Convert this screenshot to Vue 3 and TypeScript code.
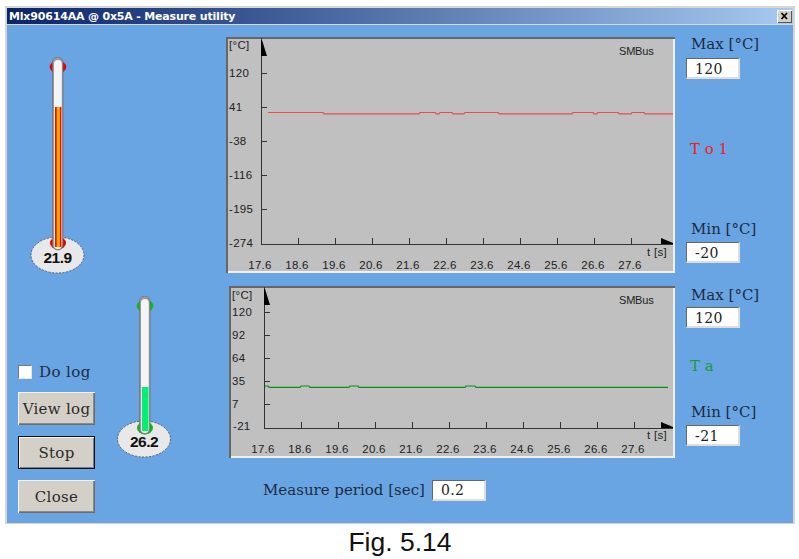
<script setup lang="ts">
interface Chart {
  id: string
  viewBox: string
  axisX: number
  axisY: number
  top: number
  right: number
  yTicks: { y: number; label: string; x: number }[]
  unitX: number
  unitY: number
  labelY: number
  labelX0: number
  tickX0: number
  smbusY: number
  tY: number
  line: string
  color: string
}

const xLabels = ['17.6', '18.6', '19.6', '20.6', '21.6', '22.6', '23.6', '24.6', '25.6', '26.6', '27.6']
const tickOffsets = [0, 1, 2, 3, 4, 5, 6, 7, 8, 9]

const hi = 112.5
const lo = 113.8
const steps: [number, number][] = [
  [268, hi], [323, hi], [324, lo], [419, lo], [420, hi], [435, hi], [436, lo], [439, lo], [440, hi],
  [452, hi], [453, lo], [464, lo], [465, hi], [498, hi], [499, lo], [572, lo], [573, hi], [593, hi],
  [594, lo], [597, lo], [598, hi], [618, hi], [619, lo], [631, lo], [632, hi], [644, hi], [645, lo], [673, lo],
]
const redLine = steps.map(p => p.join(',')).join(' ')

const gh = 386
const gl = 387.3
const gSteps: [number, number][] = [
  [265, gh], [268, gh], [269, gl], [300, gl], [301, gh], [309, gh], [310, gl], [349, gl], [350, gh],
  [358, gh], [359, gl], [465, gl], [466, gh], [475, gh], [476, gl], [668, gl],
]
const greenLine = gSteps.map(p => p.join(',')).join(' ')

const charts: Chart[] = [
  {
    id: 'to1', viewBox: '226 37 449 236', axisX: 261, axisY: 244, top: 38, right: 673,
    yTicks: [
      { y: 73, label: '120', x: 229 }, { y: 107, label: '41', x: 229 }, { y: 141, label: '-38', x: 229 },
      { y: 175, label: '-116', x: 229 }, { y: 209, label: '-195', x: 229 },
    ],
    unitX: 229, unitY: 49, labelY: 269, labelX0: 260, tickX0: 298, smbusY: 55, tY: 256,
    line: redLine, color: '#f04848',
  },
  {
    id: 'ta', viewBox: '229 286 446 172', axisX: 264, axisY: 428, top: 287, right: 673,
    yTicks: [
      { y: 312, label: '120', x: 232 }, { y: 335, label: '92', x: 232 }, { y: 358, label: '64', x: 232 },
      { y: 381, label: '35', x: 232 }, { y: 404, label: '7', x: 232 },
    ],
    unitX: 232, unitY: 299, labelY: 453, labelX0: 263, tickX0: 301, smbusY: 304, tY: 439,
    line: greenLine, color: '#0c8a1c',
  },
]

const bottomLabel = (c: Chart) => (c.id === 'to1' ? '-274' : '-21')
const bottomLabelX = (c: Chart) => (c.id === 'to1' ? 229 : 233)
const bottomLabelY = (c: Chart) => (c.id === 'to1' ? 247 : 430)

const xArrow = (c: Chart) =>
  `${c.right - 12},${c.axisY - 6} ${c.right},${c.axisY - 1} ${c.right},${c.axisY} ${c.right - 12},${c.axisY}`
const yArrow = (c: Chart) =>
  `${c.axisX},${c.top + 2} ${c.axisX + 1},${c.top + 2} ${c.axisX + 6},${c.top + 18} ${c.axisX},${c.top + 18}`
</script>

<template>
  <div class="page">
    <div class="window">
      <div class="titlebar">
        <span class="title">Mlx90614AA @ 0x5A - Measure utility</span>
        <span class="close-x">
          <svg width="11" height="10" viewBox="0 0 11 10">
            <path d="M2.5 2 L8 8 M8 2 L2.5 8" stroke="#000" stroke-width="1.7" fill="none" />
          </svg>
        </span>
      </div>

      <div class="client">
        <div class="col-a">
          <svg class="thermo thermo-red" width="56" height="217" viewBox="0 0 56 217">
            <ellipse cx="27.5" cy="198" rx="26.5" ry="18" fill="#e8e8e8" stroke="#444" stroke-width="0.8" stroke-dasharray="2 1.5" />
            <ellipse cx="28" cy="10" rx="8.3" ry="6.5" fill="#e80000" />
            <ellipse cx="28" cy="186" rx="8" ry="6.5" fill="#e80000" />
            <rect x="22.5" y="0" width="10.5" height="193" rx="5.25" fill="#9a9a9a" stroke="#666" stroke-width="0.6" />
            <rect x="24" y="3" width="7.8" height="189" rx="3.9" fill="#f4f4f4" />
            <rect x="25" y="50" width="6.4" height="140" fill="#f01000" />
            <rect x="26.7" y="50" width="3.2" height="140" fill="#ffa800" />
            <text class="thermo-value" x="27.5" y="206">21.9</text>
          </svg>

          <div class="controls">
            <label class="log">
              <input class="check" type="checkbox" />
              <span>Do log</span>
            </label>
            <button class="btn" type="button">View log</button>
            <button class="btn btn-default" type="button">Stop</button>
            <button class="btn" type="button">Close</button>
          </div>
        </div>

        <div class="col-b">
          <svg class="thermo" width="56" height="162" viewBox="0 0 56 162">
            <ellipse cx="27" cy="143" rx="26.5" ry="18" fill="#e8e8e8" stroke="#444" stroke-width="0.8" stroke-dasharray="2 1.5" />
            <ellipse cx="28" cy="10" rx="8.3" ry="6.5" fill="#0cb814" />
            <ellipse cx="28" cy="132" rx="8" ry="6.5" fill="#0cb814" />
            <rect x="22.5" y="0" width="10.5" height="138" rx="5.25" fill="#9a9a9a" stroke="#666" stroke-width="0.6" />
            <rect x="24" y="3" width="7.8" height="134" rx="3.9" fill="#f4f4f4" />
            <rect x="25" y="91" width="6.4" height="44" fill="#00f070" />
            <text class="thermo-value" x="27" y="151">26.2</text>
          </svg>
        </div>

        <div class="col-c">
          <svg
            v-for="c in charts"
            :key="c.id"
            class="chart"
            :class="'chart-' + c.id"
            :viewBox="c.viewBox"
          >
            <g class="axis">
              <line :x1="c.axisX + 0.5" :y1="c.top" :x2="c.axisX + 0.5" :y2="c.axisY + 1" />
              <line :x1="c.axisX" :y1="c.axisY + 0.5" :x2="c.right" :y2="c.axisY + 0.5" />
              <line
                v-for="t in c.yTicks"
                :key="'y' + t.y"
                :x1="c.axisX"
                :y1="t.y + 0.5"
                :x2="c.axisX + 6"
                :y2="t.y + 0.5"
              />
              <line
                v-for="i in tickOffsets"
                :key="'x' + i"
                :x1="c.tickX0 + i * 37 + 0.5"
                :y1="c.axisY - 6"
                :x2="c.tickX0 + i * 37 + 0.5"
                :y2="c.axisY"
              />
            </g>
            <polygon :points="yArrow(c)" fill="#000" />
            <polygon :points="xArrow(c)" fill="#000" />
            <polyline :points="c.line" fill="none" :stroke="c.color" stroke-width="1.2" />
            <text class="tick" :x="c.unitX" :y="c.unitY">[°C]</text>
            <text v-for="t in c.yTicks" :key="'l' + t.y" class="tick" :x="t.x" :y="t.y + 4">{{ t.label }}</text>
            <text class="tick" :x="bottomLabelX(c)" :y="bottomLabelY(c)">{{ bottomLabel(c) }}</text>
            <text
              v-for="(l, i) in xLabels"
              :key="l"
              class="tick tick-x"
              :x="c.labelX0 + i * 37"
              :y="c.labelY"
            >{{ l }}</text>
            <text class="tick smbus" x="619" :y="c.smbusY">SMBus</text>
            <text class="tick" x="647" :y="c.tY">t [s]</text>
          </svg>

          <div class="period">
            <span class="serif">Measure period [sec]</span>
            <input class="field" type="text" readonly value="0.2" />
          </div>
        </div>

        <div class="col-d">
          <div class="serif l-max1">Max [°C]</div>
          <input class="field f-max1" type="text" readonly value="120" />
          <div class="serif tag red">T o 1</div>
          <div class="serif l-min1">Min [°C]</div>
          <input class="field f-min1" type="text" readonly value="-20" />
          <div class="serif l-max2">Max [°C]</div>
          <input class="field f-max2" type="text" readonly value="120" />
          <div class="serif tag green">T a</div>
          <div class="serif l-min2">Min [°C]</div>
          <input class="field f-min2" type="text" readonly value="-21" />
        </div>
      </div>
    </div>
    <div class="caption">Fig. 5.14</div>
  </div>
</template>

<style scoped>
.page {
  width: 799px;
  height: 559px;
  background: #fff;
  overflow: hidden;
  box-sizing: border-box;
  padding-top: 6px;
  padding-left: 5px;
}
.window {
  width: 790px;
  height: 518px;
  box-sizing: border-box;
  border: 2px solid #d8d6d0;
  border-bottom-width: 1px;
  background: #d8d6d0;
}
.titlebar {
  height: 16px;
  margin-bottom: 1px;
  display: flex;
  align-items: center;
  justify-content: space-between;
  padding: 0 1px 0 2px;
  background: linear-gradient(90deg, #0a246a 0%, #a6caf0 100%);
}
.title {
  color: #fff;
  font: bold 11px "DejaVu Sans", sans-serif;
  letter-spacing: -0.18px;
  white-space: nowrap;
}
.close-x {
  width: 15px;
  height: 13px;
  display: flex;
  align-items: center;
  justify-content: center;
  background: #d4d0c8;
  box-shadow: inset 1px 1px 0 #fff, inset -1px -1px 0 #555;
}
.client {
  height: 498px;
  background: #6aa5e3;
  display: flex;
  align-items: flex-start;
  margin: 0;
}
.col-a {
  width: 110px;
  flex: none;
  padding-left: 11px;
  box-sizing: border-box;
}
.thermo {
  display: block;
}
.thermo-red {
  margin: 32px 0 0 12px;
}
.thermo-value {
  font: bold 15.5px "Liberation Sans", sans-serif;
  letter-spacing: -0.5px;
  text-anchor: middle;
  fill: #111;
}
.controls {
  margin-top: 89px;
  display: flex;
  flex-direction: column;
  gap: 11px;
}
.log {
  display: flex;
  align-items: center;
  gap: 7px;
  height: 18px;
  font: 15px/18px "DejaVu Serif", serif;
  letter-spacing: 0.4px;
  color: #1c2c44;
}
.check {
  appearance: none;
  margin: 0;
  width: 14px;
  height: 14px;
  background: #fff;
  box-sizing: border-box;
  border: 1px solid;
  border-color: #777 #e8e8e8 #e8e8e8 #777;
}
.btn {
  width: 77px;
  height: 33px;
  padding: 0;
  box-sizing: border-box;
  border: 0;
  background: #d4d0c8;
  box-shadow: inset 1px 1px 0 #f4f2ee, inset -1px -1px 0 #6c6c6c, inset -2px -2px 0 #8c8a84;
  font: 15px "DejaVu Serif", serif;
  letter-spacing: 0.3px;
  color: #2a2a2a;
}
.btn-default {
  box-shadow: inset 0 0 0 1px #111, inset 2px 2px 0 #f4f2ee, inset -2px -2px 0 #808080;
}
.col-b {
  width: 109px;
  flex: none;
  padding-top: 271px;
}
.col-c {
  width: 449px;
  flex: none;
  padding-top: 12px;
}
.chart {
  display: block;
  background: #c0c0c0;
  box-shadow: inset 2px 2px 0 #666, inset -2px -2px 0 #f0f0f0;
}
.chart-to1 {
  width: 449px;
  height: 236px;
}
.chart-ta {
  width: 446px;
  height: 172px;
  margin: 13px 0 0 3px;
}
.axis line {
  stroke: #333;
  stroke-width: 1;
}
.tick {
  font: 11.5px "Liberation Sans", sans-serif;
  letter-spacing: 0.3px;
  fill: #222;
}
.tick-x {
  text-anchor: middle;
}
.smbus {
  font-size: 11px;
  letter-spacing: -0.2px;
}
.period {
  margin: 21px 0 0 37px;
  display: flex;
  align-items: center;
  gap: 7px;
  height: 22px;
}
.serif {
  font: 15px/18px "DejaVu Serif", serif;
  color: #1c2c44;
  white-space: nowrap;
}
.field {
  display: block;
  width: 54px;
  height: 21px;
  box-sizing: border-box;
  padding: 1px 0 0 8px;
  margin: 0;
  background: #fff;
  border: 2px solid;
  border-color: #666 #ddd #ddd #666;
  border-width: 1px 2px 2px 1px;
  outline: none;
  font: 14px "DejaVu Serif", serif;
  letter-spacing: 0.4px;
  color: #222;
}
.col-d {
  margin-left: 11px;
  flex: none;
  width: 100px;
}
.col-d .serif {
  margin-left: 5px;
}
.red {
  color: #f02020;
  margin-left: 4px !important;
  margin-top: 61px;
}
.green {
  color: #1c9a30;
  margin-left: 4px !important;
  margin-top: 29px;
}
.l-max1 {
  margin-top: 10px;
}
.f-max1 {
  margin-top: 5px;
}
.l-min1 {
  margin-top: 62px;
}
.f-min1 {
  margin-top: 4px;
}
.l-max2 {
  margin-top: 23px;
}
.f-max2 {
  margin-top: 3px;
}
.l-min2 {
  margin-top: 28px;
}
.f-min2 {
  margin-top: 4px;
}
.caption {
  margin-top: 3px;
  width: 790px;
  text-align: center;
  font: 26.5px/30px "Liberation Sans", sans-serif;
  color: #111;
}
</style>
